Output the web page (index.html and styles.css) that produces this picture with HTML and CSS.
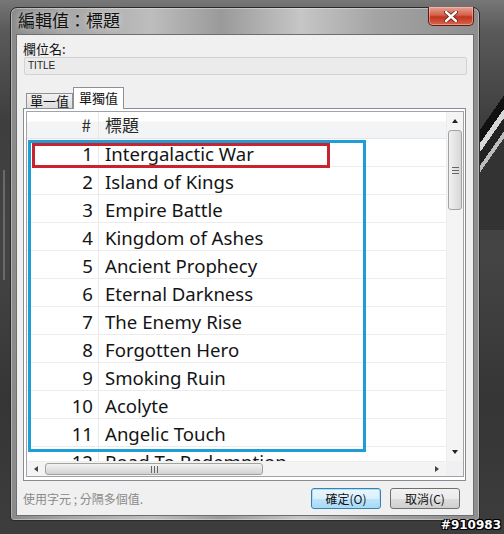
FILE: index.html
```html
<!DOCTYPE html>
<html lang="zh-Hant">
<head>
    <meta charset="UTF-8">
    <meta name="viewport" content="width=device-width, initial-scale=1.0">
    <title>編輯值：標題</title>
    <link rel="stylesheet" href="styles.css">
</head>
<body>
<div class="desktop">
    <div class="window">
        <div class="titlebar">
            <span class="title">編輯值：標題</span>
            <div class="close-btn">
                <svg width="14" height="11" viewBox="0 0 14 11">
                    <path d="M2 1 L12 10 M12 1 L2 10" stroke="#5a1a12" stroke-width="4" stroke-linecap="round"/>
                    <path d="M2 1 L12 10 M12 1 L2 10" stroke="#ffffff" stroke-width="2.4" stroke-linecap="round"/>
                </svg>
            </div>
        </div>

        <div class="client">
            <div class="field-label">欄位名:</div>
            <div class="field-box">TITLE</div>

            <div class="tabs">
                <span class="tab">單一值</span>
                <span class="tab active">單獨值</span>
            </div>

            <div class="tab-panel">
                <div class="list">
                    <div class="list-view">
                        <div class="list-head">
                            <span class="col-num">#</span>
                            <span class="col-title">標題</span>
                        </div>
                        <div class="row"><span class="col-num">1</span><span class="col-title">Intergalactic War</span></div>
                        <div class="row"><span class="col-num">2</span><span class="col-title">Island of Kings</span></div>
                        <div class="row"><span class="col-num">3</span><span class="col-title">Empire Battle</span></div>
                        <div class="row"><span class="col-num">4</span><span class="col-title">Kingdom of Ashes</span></div>
                        <div class="row"><span class="col-num">5</span><span class="col-title">Ancient Prophecy</span></div>
                        <div class="row"><span class="col-num">6</span><span class="col-title">Eternal Darkness</span></div>
                        <div class="row"><span class="col-num">7</span><span class="col-title">The Enemy Rise</span></div>
                        <div class="row"><span class="col-num">8</span><span class="col-title">Forgotten Hero</span></div>
                        <div class="row"><span class="col-num">9</span><span class="col-title">Smoking Ruin</span></div>
                        <div class="row"><span class="col-num">10</span><span class="col-title">Acolyte</span></div>
                        <div class="row"><span class="col-num">11</span><span class="col-title">Angelic Touch</span></div>
                        <div class="row"><span class="col-num">12</span><span class="col-title">Road To Redemption</span></div>

                        <!-- highlight boxes drawn over the list -->
                        <div class="mark-blue"></div>
                        <div class="mark-red"></div>
                    </div>

                    <div class="vscroll">
                        <div class="arrow-btn"><span class="tri tri-up"></span></div>
                        <div class="vtrack">
                            <div class="vthumb"><span class="grip-h"></span></div>
                        </div>
                        <div class="arrow-btn"><span class="tri tri-down"></span></div>
                    </div>

                    <div class="hscroll">
                        <div class="arrow-btn-h"><span class="tri tri-left"></span></div>
                        <div class="htrack">
                            <div class="hthumb"><span class="grip-v"></span></div>
                        </div>
                        <div class="arrow-btn-h"><span class="tri tri-right"></span></div>
                    </div>
                    <div class="corner"></div>
                </div>
            </div>

            <div class="footer">
                <span class="hint">使用字元 ; 分隔多個值.</span>
                <div class="buttons">
                    <div class="btn default">確定(O)</div>
                    <div class="btn">取消(C)</div>
                </div>
            </div>
        </div>
    </div>

    <div class="stamp">#910983</div>
</div>
</body>
</html>
```

FILE: styles.css
```css
/* Page */
body {
    margin: 0;
    font-family: "Noto Sans", "Noto Sans CJK TC", sans-serif;
}

.desktop {
    position: relative;
    width: 504px;
    height: 534px;
    padding: 7px 0 0 10px;
    box-sizing: border-box;
    overflow: hidden;
    background:
        linear-gradient(90deg, transparent 0 3px, #6a6a6a 3px 5px, transparent 5px) 0 170px / 10px 110px no-repeat,
        linear-gradient(125deg, transparent 0 40%, #111 40% 46%, #d8d8d8 46% 50%, #222 50% 56%, #bdbdbd 56% 59%, #333 59% 100%) 480px 40px / 24px 190px no-repeat,
        linear-gradient(180deg, #777 0, #5a5a5a 30px, #3e3e3e 120px, #444 260px, #353535 400px, #3d3d3d 534px);
}

/* Window frame */
.window {
    width: 470px;
    height: 514px;
    box-sizing: border-box;
    border: 1px solid #2a2a2a;
    border-radius: 7px 7px 4px 4px;
    background:
        linear-gradient(90deg, #8a8a8a 0, #a6a6a6 12%, #bdbdbd 30%, #9a9a9a 45%, #c6c6c6 62%, #a4a4a4 78%, #8e8e8e 100%);
    box-shadow: inset 0 0 0 1px rgba(255, 255, 255, 0.35);
    display: flex;
    flex-direction: column;
}

.titlebar {
    height: 26px;
    display: flex;
    justify-content: space-between;
    align-items: flex-start;
    padding: 0 5px 0 7px;
}

.title {
    font-family: "Noto Sans CJK TC", sans-serif;
    font-size: 17px;
    line-height: 20px;
    padding-top: 2px;
    color: #111;
    text-shadow: 0 0 6px rgba(255, 255, 255, 0.7);
}

.close-btn {
    width: 46px;
    height: 19px;
    box-sizing: border-box;
    margin-top: -1px;
    border: 1px solid #5b1c14;
    border-top: none;
    border-radius: 0 0 5px 5px;
    background: linear-gradient(180deg, #e8a294 0, #d4614c 45%, #c0341f 55%, #d8654e 100%);
    box-shadow: inset 0 0 0 1px rgba(255, 200, 190, 0.5);
    display: flex;
    align-items: center;
    justify-content: center;
}

/* Client area */
.client {
    flex: 1;
    margin: 0 5px 4px 5px;
    border: 1px solid #6e6e6e;
    background: #f0f0f0;
    display: flex;
    flex-direction: column;
    font-family: "Noto Sans CJK TC", sans-serif;
}

.field-label {
    font-size: 13px;
    line-height: 16px;
    color: #111;
    padding: 6px 0 0 6px;
}

.field-box {
    height: 18px;
    box-sizing: border-box;
    margin: 0 6px 0 7px;
    border: 1px solid #d2d2d2;
    border-radius: 2px;
    background: #ebebeb;
    font-family: "Liberation Sans", sans-serif;
    font-size: 10px;
    line-height: 16px;
    padding-left: 3px;
    color: #222;
}

.tabs {
    display: flex;
    align-items: flex-end;
    margin: 12px 0 0 9px;
    height: 21px;
    position: relative;
    z-index: 1;
}

.tab {
    height: 15px;
    box-sizing: border-box;
    padding: 0 3px;
    border: 1px solid #8d9096;
    border-bottom: none;
    background: linear-gradient(180deg, #f2f2f2, #dcdcdc);
    font-size: 13px;
    line-height: 14px;
    color: #111;
}

.tab.active {
    height: 22px;
    margin-bottom: -1px;
    padding: 2px 5px 0 5px;
    background: #fff;
    font-size: 13px;
    line-height: 16px;
}

.tab-panel {
    height: 373px;
    box-sizing: border-box;
    margin: 0 7px 0 6px;
    border: 1px solid #898c95;
    background: #fff;
    padding: 2px 1px 3px 2px;
}

/* List view with scrollbars */
.list {
    height: 100%;
    box-sizing: border-box;
    border: 1px solid #9fa3aa;
    display: grid;
    grid-template-columns: 1fr 17px;
    grid-template-rows: 1fr 15px;
    background: #fff;
}

.list-view {
    position: relative;
    overflow: hidden;
    font-family: "Noto Sans", sans-serif;
}

.list-head {
    height: 27px;
    box-sizing: border-box;
    display: flex;
    background: linear-gradient(180deg, #fff 0 9px, #f3f4f5 10px 100%);
    border-bottom: 1px solid #e4e5e7;
    font-family: "Noto Sans CJK TC", sans-serif;
    font-size: 17px;
    line-height: 26px;
    color: #2a2a2a;
}

.list-head .col-num {
    padding-right: 7px;
}

.row {
    height: 28px;
    box-sizing: border-box;
    display: flex;
    border-bottom: 1px solid #ececec;
    font-size: 18.6px;
    line-height: 30px;
    color: #141414;
}

.col-num {
    width: 72px;
    flex: none;
    box-sizing: border-box;
    text-align: right;
    padding-right: 5px;
    border-right: 1px solid #e8e8e8;
}

.col-title {
    padding-left: 6px;
    white-space: nowrap;
}

.mark-blue {
    position: absolute;
    left: 1px;
    top: 28px;
    width: 338px;
    height: 312px;
    box-sizing: border-box;
    border: 3px solid #1f9dd6;
}

.mark-red {
    position: absolute;
    left: 5px;
    top: 31px;
    width: 298px;
    height: 25px;
    box-sizing: border-box;
    border: 3px solid #c9232f;
}

.vscroll {
    display: flex;
    flex-direction: column;
    background: #f4f4f4;
    border-left: 1px solid #ededed;
}

.arrow-btn {
    height: 18px;
    display: flex;
    align-items: center;
    justify-content: center;
}

.vtrack {
    flex: 1;
    padding: 0 1px;
}

.vthumb {
    height: 80px;
    box-sizing: border-box;
    border: 1px solid #a2a2a2;
    border-radius: 3px;
    background: linear-gradient(90deg, #f1f1f1, #e4e4e4 50%, #d6d6d6);
    display: flex;
    align-items: center;
    justify-content: center;
}

.grip-h {
    width: 7px;
    height: 5px;
    border-top: 1px solid #666;
    border-bottom: 1px solid #666;
    background: linear-gradient(180deg, transparent 2px, #666 2px 3px, transparent 3px);
}

.hscroll {
    display: flex;
    background: #f4f4f4;
    border-top: 1px solid #ededed;
}

.arrow-btn-h {
    width: 18px;
    display: flex;
    align-items: center;
    justify-content: center;
}

.htrack {
    flex: 1;
    padding: 1px 0;
}

.hthumb {
    width: 218px;
    height: 100%;
    box-sizing: border-box;
    border: 1px solid #a2a2a2;
    border-radius: 3px;
    background: linear-gradient(180deg, #f3f3f3, #e2e2e2 50%, #d2d2d2);
    display: flex;
    align-items: center;
    justify-content: center;
}

.grip-v {
    width: 5px;
    height: 7px;
    border-left: 1px solid #666;
    border-right: 1px solid #666;
    background: linear-gradient(90deg, transparent 2px, #666 2px 3px, transparent 3px);
}

.corner {
    background: #f0f0f0;
}

.tri {
    width: 0;
    height: 0;
    border: 3px solid transparent;
}

.tri-up { border-bottom: 4px solid #222; border-top-width: 0; }
.tri-down { border-top: 4px solid #222; border-bottom-width: 0; }
.tri-left { border-right: 4px solid #444; border-left-width: 0; }
.tri-right { border-left: 4px solid #444; border-right-width: 0; }

/* Footer */
.footer {
    flex: 1;
    display: flex;
    align-items: center;
    justify-content: space-between;
    padding: 0 13px 0 6px;
}

.hint {
    font-size: 12px;
    color: #8a8a8a;
}

.buttons {
    display: flex;
    gap: 9px;
}

.btn {
    width: 70px;
    height: 21px;
    box-sizing: border-box;
    border: 1px solid #707070;
    border-radius: 3px;
    background: linear-gradient(180deg, #f2f2f2 0, #ebebeb 50%, #dddddd 50%, #cfcfcf 100%);
    font-size: 12px;
    line-height: 19px;
    text-align: center;
    color: #111;
}

.btn.default {
    border-color: #3c7fb1;
    box-shadow: inset 0 0 0 1px #a6e0f7;
    background: linear-gradient(180deg, #eaf6fd 0, #d9f0fc 50%, #bee6fd 50%, #a7d9f5 100%);
}

.stamp {
    position: absolute;
    right: 3px;
    bottom: 2px;
    font-family: "DejaVu Sans", sans-serif;
    font-weight: bold;
    font-size: 12px;
    color: #fff;
    text-shadow: 1px 1px 0 #000, -1px -1px 0 #000, 1px -1px 0 #000, -1px 1px 0 #000;
}
```
